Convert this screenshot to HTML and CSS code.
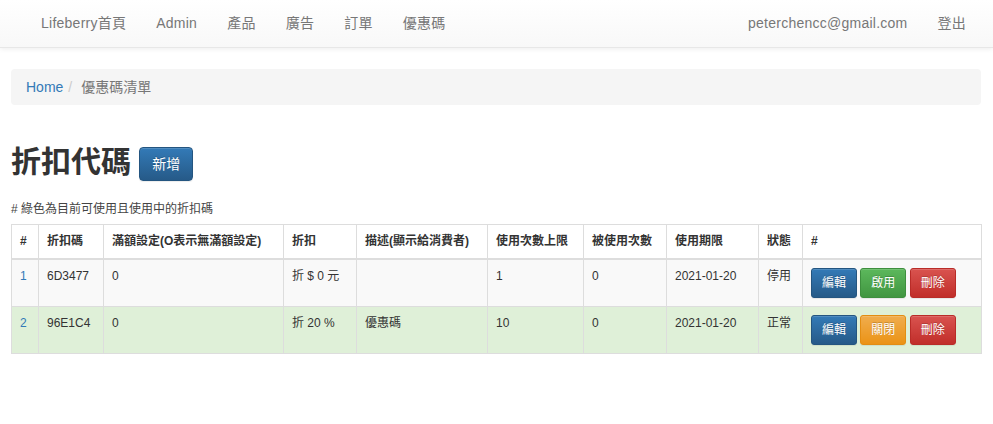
FILE: index.html
```html
<!DOCTYPE html>
<html lang="zh-Hant">
<head>
<meta charset="utf-8">
<title>優惠碼清單</title>
<link rel="stylesheet" href="styles.css">
</head>
<body>
<nav class="navbar">
  <div class="container nav-inner">
    <ul class="nav">
      <li><a href="#">Lifeberry首頁</a></li>
      <li><a href="#">Admin</a></li>
      <li><a href="#">產品</a></li>
      <li><a href="#">廣告</a></li>
      <li><a href="#">訂單</a></li>
      <li><a href="#">優惠碼</a></li>
    </ul>
    <ul class="nav">
      <li><a href="#">peterchencc@gmail.com</a></li>
      <li><a href="#">登出</a></li>
    </ul>
  </div>
</nav>
<main class="container content">
  <ol class="breadcrumb">
    <li><a href="#">Home</a></li>
    <li class="active">優惠碼清單</li>
  </ol>
  <h2 class="page-title">折扣代碼 <a href="#" class="btn btn-primary">新增</a></h2>
  <p class="hint"># 綠色為目前可使用且使用中的折扣碼</p>
  <table class="table">
    <colgroup>
      <col class="c1"><col class="c2"><col class="c3"><col class="c4"><col class="c5">
      <col class="c6"><col class="c7"><col class="c8"><col class="c9"><col class="c10">
    </colgroup>
    <thead>
      <tr>
        <th>#</th><th>折扣碼</th><th>滿額設定(O表示無滿額設定)</th><th>折扣</th><th>描述(顯示給消費者)</th>
        <th>使用次數上限</th><th>被使用次數</th><th>使用期限</th><th>狀態</th><th>#</th>
      </tr>
    </thead>
    <tbody>
      <tr class="striped">
        <td><a href="#">1</a></td><td>6D3477</td><td>0</td><td>折 $ 0 元</td><td></td>
        <td>1</td><td>0</td><td>2021-01-20</td><td>停用</td>
        <td class="actions"><a href="#" class="btn btn-sm btn-primary">編輯</a> <a href="#" class="btn btn-sm btn-success">啟用</a> <a href="#" class="btn btn-sm btn-danger">刪除</a></td>
      </tr>
      <tr class="success">
        <td><a href="#">2</a></td><td>96E1C4</td><td>0</td><td>折 20 %</td><td>優惠碼</td>
        <td>10</td><td>0</td><td>2021-01-20</td><td>正常</td>
        <td class="actions"><a href="#" class="btn btn-sm btn-primary">編輯</a> <a href="#" class="btn btn-sm btn-warning">關閉</a> <a href="#" class="btn btn-sm btn-danger">刪除</a></td>
      </tr>
    </tbody>
  </table>
</main>
</body>
</html>
```

FILE: styles.css
```css
* { box-sizing: border-box; }
html, body { margin: 0; padding: 0; }
body {
  font-family: "Liberation Sans", "Noto Sans CJK TC", sans-serif;
  font-size: 14px;
  line-height: 1.42857;
  color: #333;
  background: #fff;
}
a { color: #337ab7; text-decoration: none; }

.container { width: 970px; margin: 0 0 0 11px; }

.navbar {
  background-image: linear-gradient(to bottom, #fff 0, #f8f8f8 100%);
  border-bottom: 1px solid #e7e7e7;
  box-shadow: inset 0 1px 0 rgba(255,255,255,.15), 0 1px 5px rgba(0,0,0,.075);
  margin-bottom: 21px;
}
.nav-inner {
  display: flex;
  justify-content: space-between;
  padding-left: 15px;
}
.nav {
  display: flex;
  list-style: none;
  margin: 0;
  padding: 0;
}
.nav a {
  display: block;
  padding: 13px 15px 14px;
  line-height: 20px;
  color: #777;
  letter-spacing: 0.25px;
}

.content { display: flex; flex-direction: column; }

.breadcrumb {
  display: flex;
  list-style: none;
  margin: 0 0 20px;
  padding: 8px 15px;
  line-height: 20px;
  background: #f5f5f5;
  border-radius: 4px;
}
.breadcrumb li + li::before {
  content: "/\00a0";
  padding: 0 5px;
  color: #ccc;
}
.breadcrumb .active { color: #777; }

.page-title {
  margin: 20px 0 10px;
  font-size: 30px;
  font-weight: 700;
  line-height: 1.1;
  color: #333;
}

.btn {
  display: inline-block;
  padding: 6px 12px;
  font-size: 14px;
  font-weight: 400;
  line-height: 20px;
  text-align: center;
  vertical-align: middle;
  border: 1px solid transparent;
  border-radius: 4px;
  color: #fff;
  text-shadow: 0 -1px 0 rgba(0,0,0,.2);
  box-shadow: inset 0 1px 0 rgba(255,255,255,.15), 0 1px 1px rgba(0,0,0,.075);
}
.btn-sm {
  padding: 5px 10px;
  font-size: 12px;
  line-height: 18px;
  border-radius: 3px;
}
.btn-primary { background-image: linear-gradient(to bottom, #337ab7 0, #265a88 100%); border-color: #245580; }
.btn-success { background-image: linear-gradient(to bottom, #5cb85c 0, #419641 100%); border-color: #3e8f3e; }
.btn-warning { background-image: linear-gradient(to bottom, #f0ad4e 0, #eb9316 100%); border-color: #e38d13; }
.btn-danger  { background-image: linear-gradient(to bottom, #d9534f 0, #c12e2a 100%); border-color: #b92c28; }

.hint {
  margin: 10px 0 6px;
  font-size: 12px;
  line-height: 17px;
  color: #444;
}

.table {
  width: 970px;
  table-layout: fixed;
  border-collapse: collapse;
  border: 1px solid #ddd;
  font-size: 12px;
  line-height: 17px;
}
.table th, .table td {
  padding: 8px;
  border: 1px solid #ddd;
  text-align: left;
  vertical-align: top;
  white-space: nowrap;
  overflow: hidden;
}
.table th {
  font-weight: 700;
  vertical-align: bottom;
  border-bottom-width: 2px;
}
.table .striped td { background: #f9f9f9; }
.table .success td { background: #dff0d8; }
.table td.actions { line-height: 0; }

.c1 { width: 27px; }
.c2 { width: 65px; }
.c3 { width: 180px; }
.c4 { width: 73px; }
.c5 { width: 131px; }
.c6 { width: 96px; }
.c7 { width: 83px; }
.c8 { width: 92px; }
.c9 { width: 44px; }
.c10 { width: 179px; }
```
